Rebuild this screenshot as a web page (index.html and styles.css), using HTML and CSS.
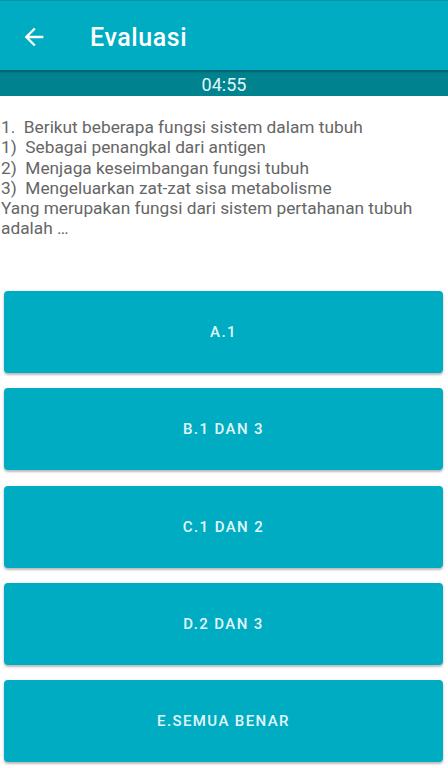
FILE: index.html
```html
<!DOCTYPE html>
<html>
<head>
<meta charset="utf-8">
<link rel="stylesheet" href="styles.css">
</head>
<body>
<div class="appbar">
  <svg class="back" viewBox="0 0 24 24"><path d="M20 11H7.83l5.59-5.59L12 4l-8 8 8 8 1.41-1.41L7.83 13H20v-2z" fill="#fff"/></svg>
  <div class="title">Evaluasi</div>
</div>
<div class="timer">04:55</div>
<div class="question">1.&nbsp; Berikut beberapa fungsi sistem dalam tubuh<br>1)&nbsp; Sebagai penangkal dari antigen<br>2)&nbsp; Menjaga keseimbangan fungsi tubuh<br>3)&nbsp; Mengeluarkan zat-zat sisa metabolisme<br>Yang merupakan fungsi dari sistem pertahanan tubuh adalah …</div>
<div class="options">
  <div class="opt">A.1</div>
  <div class="opt">B.1 DAN 3</div>
  <div class="opt">C.1 DAN 2</div>
  <div class="opt">D.2 DAN 3</div>
  <div class="opt">E.SEMUA BENAR</div>
</div>
</body>
</html>
```
FILE: styles.css
```css
html, body { margin: 0; padding: 0; background: #fff; }
body { width: 448px; height: 768px; overflow: hidden; font-family: Roboto, "Noto Sans", sans-serif; }
.appbar {
  height: 70px;
  background: #00acc1;
  border-top: 1px solid #0097a7;
  box-sizing: border-box;
  display: flex;
  align-items: center;
  padding-top: 3px;
  color: #fff;
}
.back { margin-left: 20px; width: 28px; height: 28px; }
.title { margin-left: 42px; font-size: 25px; font-weight: 500; letter-spacing: 0.6px; }
.timer {
  height: 26px;
  background: #00838f;
  box-shadow: inset 0 3px 2px -1px rgba(0,0,0,0.25);
  color: #e0f7fa;
  text-align: center;
  font-size: 18px;
  line-height: 29px;
}
.question {
  padding: 21px 0 0 1px;
  color: #666;
  font-size: 17.3px;
  line-height: 20.3px;
  height: 193px;
  box-sizing: border-box;
}
.options {
  display: flex;
  flex-direction: column;
  gap: 15.3px;
  padding: 2px 5px 0 4px;
}
.opt {
  height: 82px;
  background: #00acc1;
  border-radius: 4px;
  box-shadow: 0 2px 2px rgba(0,0,0,0.2), 0 1px 4px rgba(0,0,0,0.12);
  display: flex;
  align-items: center;
  justify-content: center;
  color: #e0f7fa;
  font-size: 15px;
  font-weight: 500;
  letter-spacing: 1.4px;
}
```
